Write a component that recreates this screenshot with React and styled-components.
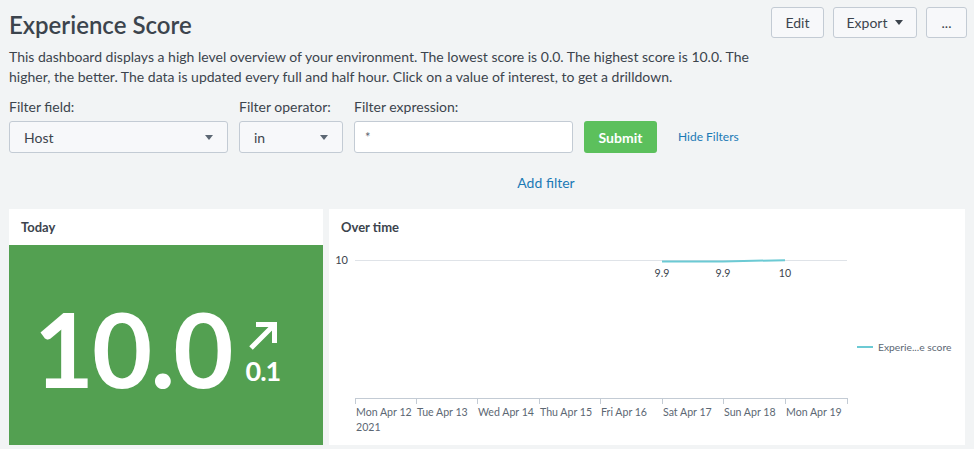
import styled, { createGlobalStyle } from "styled-components";

const GlobalStyle = createGlobalStyle`
  html, body {
    margin: 0;
    padding: 0;
    background: #f2f4f5;
    font-family: Lato, "Open Sans", sans-serif;
    color: #3c444d;
  }
`;

const Page = styled.div`
  width: 974px;
  height: 449px;
  box-sizing: border-box;
  padding: 7px 9px 0 9px;
  overflow: hidden;
`;

const HeaderRow = styled.div`
  display: flex;
  justify-content: space-between;
  align-items: flex-start;
`;

const Title = styled.h1`
  margin: 0;
  font-size: 24px;
  font-weight: 600;
  line-height: 36px;
  color: #3c444d;
`;

const ButtonGroup = styled.div`
  display: flex;
  gap: 9px;
  margin-right: -2px;
`;

const Button = styled.button`
  height: 31px;
  padding: 0 12px;
  width: ${(p) => p.$width}px;
  border: 1px solid #c3cbd4;
  border-radius: 3px;
  background: #f7f8fa;
  color: #3c444d;
  font-family: inherit;
  font-size: 14px;
  display: flex;
  align-items: center;
  justify-content: center;
  gap: 8px;
`;

const Caret = styled.span`
  width: 0;
  height: 0;
  border-left: 4px solid transparent;
  border-right: 4px solid transparent;
  border-top: 5px solid ${(p) => p.$color || "#3c444d"};
`;

const Description = styled.p`
  margin: 4px 0 0 0;
  max-width: 770px;
  font-size: 14px;
  line-height: 20px;
`;

const FilterRow = styled.div`
  display: flex;
  align-items: flex-end;
  gap: 11px;
  margin-top: 10px;
`;

const Field = styled.div`
  display: flex;
  flex-direction: column;
  gap: 4px;
  width: ${(p) => p.$width}px;
`;

const Label = styled.label`
  font-size: 14px;
  line-height: 20px;
`;

const Select = styled.div`
  height: 32px;
  box-sizing: border-box;
  border: 1px solid #c3cbd4;
  border-radius: 3px;
  background: #f7f8fa;
  display: flex;
  align-items: center;
  justify-content: space-between;
  padding: 0 14px 0 14px;
  font-size: 14px;
`;

const Input = styled.div`
  height: 32px;
  box-sizing: border-box;
  border: 1px solid #c3cbd4;
  border-radius: 3px;
  background: #fff;
  display: flex;
  align-items: center;
  padding: 0 10px;
  font-size: 13px;
  color: #5c6773;
`;

const SubmitButton = styled.button`
  height: 32px;
  width: 73px;
  border: none;
  border-radius: 3px;
  background: #5cc05c;
  color: #fff;
  font-family: inherit;
  font-weight: 700;
  font-size: 14px;
`;

const Link = styled.a`
  color: #1c7ab5;
  font-size: ${(p) => p.$size || 14}px;
  text-decoration: none;
  cursor: pointer;
`;

const HideLink = styled(Link)`
  margin-left: 10px;
  line-height: 32px;
`;

const AddFilterRow = styled.div`
  text-align: center;
  padding-left: 118px;
  margin-top: 19px;
  line-height: 20px;
`;

const Panels = styled.div`
  display: flex;
  gap: 6px;
  margin-top: 16px;
`;

const Panel = styled.section`
  width: ${(p) => p.$width}px;
  height: 236px;
  background: #fff;
  display: flex;
  flex-direction: column;
`;

const PanelTitle = styled.h2`
  margin: 0;
  height: 36px;
  padding: 0 12px;
  font-size: 13px;
  font-weight: 700;
  line-height: 36px;
  color: #3c444d;
`;

const SingleValue = styled.div`
  flex: 1;
  background: #53a051;
  color: #fff;
  display: flex;
  align-items: center;
  justify-content: center;
  gap: 14px;
  padding: 6px 18px 0 0;
`;

const BigNumber = styled.span`
  font-size: 104px;
  font-weight: 700;
  letter-spacing: -2px;
  line-height: 1;
`;

const Trend = styled.div`
  display: flex;
  flex-direction: column;
  align-items: center;
  gap: 10px;
  padding-top: 6px;
`;

const TrendValue = styled.span`
  font-size: 27px;
  font-weight: 700;
  line-height: 20px;
  letter-spacing: -1px;
`;

const ChartArea = styled.svg`
  display: block;
  font-family: Lato, "Open Sans", sans-serif;
`;

const ticks = [26, 87, 148, 210, 271, 333, 394, 456, 518];
const days = [
  "Mon Apr 12",
  "Tue Apr 13",
  "Wed Apr 14",
  "Thu Apr 15",
  "Fri Apr 16",
  "Sat Apr 17",
  "Sun Apr 18",
  "Mon Apr 19",
];
const points = [
  { x: 333, y: 16.6, label: "9.9" },
  { x: 394, y: 16.4, label: "9.9" },
  { x: 456, y: 15.2, label: "10" },
];

function OverTimeChart() {
  return (
    <ChartArea width="636" height="200" viewBox="0 0 636 200">
      <text x="19" y="19" fontSize="11" fill="#3c444d" textAnchor="end">
        10
      </text>
      <line x1="26" x2="518" y1="15.5" y2="15.5" stroke="#dfe3e8" />
      <line x1="26" x2="518" y1="153.5" y2="153.5" stroke="#c3cbd4" />
      {ticks.map((t) => (
        <line key={t} x1={t + 0.5} x2={t + 0.5} y1="153" y2="159" stroke="#c3cbd4" />
      ))}
      {days.map((d, i) => (
        <text key={d} x={ticks[i] + 1} y="171" fontSize="10.6" fill="#5c6773">
          {d}
        </text>
      ))}
      <text x="27" y="186" fontSize="10.6" fill="#5c6773">
        2021
      </text>
      <polyline
        points={points.map((p) => `${p.x},${p.y}`).join(" ")}
        fill="none"
        stroke="#6ccad4"
        strokeWidth="2"
      />
      {points.map((p) => (
        <text key={p.x} x={p.x} y="32" fontSize="10.6" fill="#3c444d" textAnchor="middle">
          {p.label}
        </text>
      ))}
      <line x1="528" x2="544" y1="102" y2="102" stroke="#6ccad4" strokeWidth="2" />
      <text x="549" y="106" fontSize="10.3" fill="#5c6773">
        Experie...e score
      </text>
    </ChartArea>
  );
}

export default function App() {
  return (
    <>
      <GlobalStyle />
      <Page>
        <HeaderRow>
          <Title>Experience Score</Title>
          <ButtonGroup>
            <Button $width={53}>Edit</Button>
            <Button $width={84}>
              Export <Caret />
            </Button>
            <Button $width={41}>...</Button>
          </ButtonGroup>
        </HeaderRow>
        <Description>
          This dashboard displays a high level overview of your environment. The
          lowest score is 0.0. The highest score is 10.0. The higher, the better.
          The data is updated every full and half hour. Click on a value of
          interest, to get a drilldown.
        </Description>
        <FilterRow>
          <Field $width={219}>
            <Label>Filter field:</Label>
            <Select>
              Host <Caret $color="#5c6773" />
            </Select>
          </Field>
          <Field $width={104}>
            <Label>Filter operator:</Label>
            <Select>
              in <Caret $color="#5c6773" />
            </Select>
          </Field>
          <Field $width={219}>
            <Label>Filter expression:</Label>
            <Input>*</Input>
          </Field>
          <SubmitButton>Submit</SubmitButton>
          <HideLink $size={12}>Hide Filters</HideLink>
        </FilterRow>
        <AddFilterRow>
          <Link $size={14}>Add filter</Link>
        </AddFilterRow>
        <Panels>
          <Panel $width={314}>
            <PanelTitle>Today</PanelTitle>
            <SingleValue>
              <BigNumber>10.0</BigNumber>
              <Trend>
                <svg width="30" height="30" viewBox="0 0 30 30">
                  <path
                    d="M3 27 L25 5 M8 3.5 H26.5 V22"
                    fill="none"
                    stroke="#fff"
                    strokeWidth="5"
                  />
                </svg>
                <TrendValue>0.1</TrendValue>
              </Trend>
            </SingleValue>
          </Panel>
          <Panel $width={636}>
            <PanelTitle>Over time</PanelTitle>
            <OverTimeChart />
          </Panel>
        </Panels>
      </Page>
    </>
  );
}
